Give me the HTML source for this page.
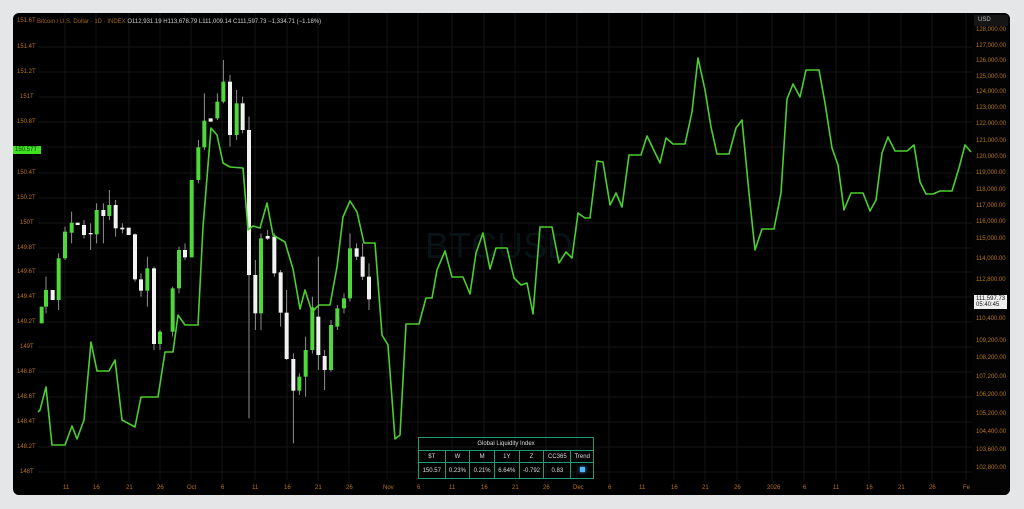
<!DOCTYPE html>
<html><head><meta charset="utf-8"><style>
html,body{margin:0;padding:0;background:#e5e6e8;width:1024px;height:509px;overflow:hidden;font-family:"Liberation Sans",sans-serif}
#f{position:absolute;left:13px;top:13px;width:997px;height:482px;background:#000;border-radius:6px;overflow:hidden}
.t{position:absolute;font-size:6px;color:#b8741c;white-space:nowrap}
table{border-collapse:collapse;position:absolute;left:418px;top:437px;width:176px;font-size:6px;color:#ddd;text-align:center}
td{border:1px solid #1f9a78;height:11px;padding:0}
</style></head><body>
<div id="f"></div>
<svg width="1024" height="509" style="position:absolute;left:0;top:0">
<defs><clipPath id="c"><rect x="13" y="13" width="997" height="482" rx="6"/></clipPath></defs>
<g clip-path="url(#c)">
<g stroke="#141414" stroke-width="1">
<path d="M65 13V480M96 13V480M129 13V480M160 13V480M191 13V480M222 13V480M255 13V480M287 13V480M318 13V480M349 13V480M387 13V480M418 13V480M452 13V480M484 13V480M515 13V480M546 13V480M577 13V480M609 13V480M642 13V480M674 13V480M705 13V480M737 13V480M772 13V480M804 13V480M836 13V480M869 13V480M901 13V480M932 13V480M966 13V480"/>
<path d="M38 47H972M38 72H972M38 97H972M38 122H972M38 147H972M38 173H972M38 198H972M38 223H972M38 248H972M38 272H972M38 297H972M38 322H972M38 347H972M38 372H972M38 397H972M38 422H972M38 447H972M38 472H972"/>
</g>
<text x="425" y="258" font-size="36" fill="#081317" font-family="Liberation Sans">BTCUSD</text>
<g transform="translate(30,60) scale(0.33333)" stroke-width="2.5">
<g stroke="#aaa" fill="none">
<path d="M48 650V760M86 580V750M105 500V600M125 455V550M162 480V535M182 490V570M200 430V550M220 430V550M238 390V480M257 420V530M277 490V520M315 520V665M333 640V710M352 590V740M372 620V870M390 810V870M428 680V830M447 560V700M465 550V600M505 240V370M523 100V270M562 100V180M580 0V130M600 45V260M620 90V240M638 110V220M657 170V1075M676 600V810M693 520V810M713 510V540M733 520V650M752 630V800M770 690V900M790 880V1150M808 940V1005M827 830V1010M847 710V880M865 590V930M884 870V990M903 780V935M922 735V810M942 700V760M960 520V725M980 550V600M998 550V660M1017 610V750"/>
</g>
<g fill="#4fd83a" stroke="none">
<rect x="29" y="740" width="12" height="50"/><rect x="42" y="690" width="12" height="50"/><rect x="80" y="595" width="12" height="125"/><rect x="99" y="515" width="12" height="80"/><rect x="119" y="488" width="12" height="30"/><rect x="194" y="450" width="12" height="73"/><rect x="232" y="435" width="12" height="33"/><rect x="346" y="625" width="12" height="67"/><rect x="384" y="815" width="12" height="37"/><rect x="422" y="685" width="12" height="130"/><rect x="441" y="570" width="12" height="115"/><rect x="479" y="360" width="12" height="232"/><rect x="499" y="262" width="12" height="98"/><rect x="517" y="182" width="12" height="80"/><rect x="556" y="125" width="12" height="50"/><rect x="574" y="65" width="12" height="60"/><rect x="614" y="130" width="12" height="95"/><rect x="687" y="535" width="12" height="225"/><rect x="802" y="950" width="12" height="42"/><rect x="821" y="870" width="12" height="80"/><rect x="841" y="742" width="12" height="128"/><rect x="897" y="795" width="12" height="135"/><rect x="916" y="745" width="12" height="55"/><rect x="936" y="715" width="12" height="30"/><rect x="954" y="565" width="12" height="150"/>
</g>
<g fill="#f2f2f2" stroke="none">
<rect x="62" y="690" width="12" height="30"/><rect x="137" y="488" width="12" height="7"/><rect x="156" y="495" width="12" height="30"/><rect x="176" y="519" width="12" height="4"/><rect x="214" y="450" width="12" height="18"/><rect x="251" y="435" width="12" height="70"/><rect x="271" y="503" width="12" height="5"/><rect x="290" y="503" width="12" height="22"/><rect x="309" y="523" width="12" height="135"/><rect x="327" y="658" width="12" height="34"/><rect x="366" y="625" width="12" height="227"/><rect x="459" y="570" width="12" height="22"/><rect x="536" y="175" width="12" height="10"/><rect x="594" y="65" width="12" height="160"/><rect x="632" y="130" width="12" height="80"/><rect x="651" y="210" width="12" height="435"/><rect x="670" y="645" width="12" height="115"/><rect x="707" y="528" width="12" height="8"/><rect x="727" y="530" width="12" height="110"/><rect x="746" y="637" width="12" height="121"/><rect x="764" y="758" width="12" height="139"/><rect x="784" y="897" width="12" height="95"/><rect x="859" y="770" width="12" height="115"/><rect x="878" y="888" width="12" height="42"/><rect x="974" y="565" width="12" height="25"/><rect x="992" y="590" width="12" height="60"/><rect x="1011" y="650" width="12" height="68"/>
</g>
</g>
<polyline fill="none" stroke="#4ccf2e" stroke-width="1.6" stroke-linejoin="round" points="38,412 40,410 46,387 52,445 65,445 72,426 77,439 84,420 91,342 97,371 109,371 115,360 122,420 135,427 141,397 158,397 165,352 173,352 178,315 185,325 198,325 203,227 211,128 217,135 223,163 230,167 243,168 248,230 253,226 260,228 267,203 273,235 285,242 293,269 300,309 305,290 312,312 319,305 330,305 337,267 343,217 350,201 357,212 364,243 375,243 382,335 388,345 395,439 400,435 406,324 419,324 426,298 432,298 437,270 445,251 452,277 463,277 470,294 476,253 483,233 490,269 496,248 507,248 514,278 521,285 527,283 533,314 540,227 552,227 559,263 566,252 572,258 578,213 585,218 590,218 597,161 603,162 610,205 616,193 622,207 629,155 641,155 647,136 660,163 666,138 673,144 685,144 692,112 698,58 705,90 711,127 717,154 729,154 736,128 742,120 749,193 755,250 762,229 774,229 781,193 787,99 793,84 800,97 806,70 819,70 825,103 832,148 838,165 844,210 851,193 863,193 870,211 876,200 882,153 888,137 895,151 907,151 914,145 920,182 926,194 933,194 940,191 952,191 959,168 965,145 971,152"/>
<rect x="972" y="13" width="38" height="482" fill="#030303"/>
<rect x="974" y="15" width="34" height="11" fill="#151515"/>
</g>
</svg>
<div class="t" style="left:978px;top:17px;color:#bbb">USD</div>
<div class="t" style="left:37px;top:19px;color:#a0621a">Bitcoin / U.S. Dollar · 1D · INDEX <span style="color:#ccc">O112,931.19 H113,678.79 L111,009.14 C111,597.73 −1,334.71 (−1.18%)</span></div>
<div class="t" style="left:17px;top:18px">151.6T</div><div class="t" style="left:17px;top:44px">151.4T</div><div class="t" style="left:17px;top:69px">151.2T</div><div class="t" style="left:20px;top:94px">151T</div><div class="t" style="left:17px;top:119px">150.8T</div>
<div class="t" style="left:13px;top:146px;background:#3ee01f;color:#0a3a06;padding:1px 4px 1px 2px">150.57T</div>
<div class="t" style="left:17px;top:170px">150.4T</div><div class="t" style="left:17px;top:195px">150.2T</div><div class="t" style="left:20px;top:220px">150T</div><div class="t" style="left:17px;top:245px">149.8T</div><div class="t" style="left:17px;top:269px">149.6T</div><div class="t" style="left:17px;top:294px">149.4T</div><div class="t" style="left:17px;top:319px">149.2T</div><div class="t" style="left:20px;top:344px">149T</div><div class="t" style="left:17px;top:369px">148.8T</div><div class="t" style="left:17px;top:394px">148.6T</div><div class="t" style="left:17px;top:419px">148.4T</div><div class="t" style="left:17px;top:444px">148.2T</div><div class="t" style="left:20px;top:469px">148T</div>
<div class="t" style="left:976px;top:27px">128,000.00</div><div class="t" style="left:976px;top:43px">127,000.00</div><div class="t" style="left:976px;top:58px">126,000.00</div><div class="t" style="left:976px;top:74px">125,000.00</div><div class="t" style="left:976px;top:89px">124,000.00</div><div class="t" style="left:976px;top:105px">123,000.00</div><div class="t" style="left:976px;top:121px">122,000.00</div><div class="t" style="left:976px;top:138px">121,000.00</div><div class="t" style="left:976px;top:154px">120,000.00</div><div class="t" style="left:976px;top:170px">119,000.00</div><div class="t" style="left:976px;top:187px">118,000.00</div><div class="t" style="left:976px;top:203px">117,000.00</div><div class="t" style="left:976px;top:219px">116,000.00</div><div class="t" style="left:976px;top:236px">115,000.00</div><div class="t" style="left:976px;top:256px">114,000.00</div><div class="t" style="left:976px;top:277px">112,800.00</div>
<div class="t" style="left:974px;top:295px;background:#eee;color:#111;padding:1px 2px;line-height:6px">111,597.73<br>05:40:45</div>
<div class="t" style="left:976px;top:316px">110,400.00</div><div class="t" style="left:976px;top:338px">109,200.00</div><div class="t" style="left:976px;top:355px">108,200.00</div><div class="t" style="left:976px;top:374px">107,200.00</div><div class="t" style="left:976px;top:392px">106,200.00</div><div class="t" style="left:976px;top:411px">105,200.00</div><div class="t" style="left:976px;top:429px">104,400.00</div><div class="t" style="left:976px;top:447px">103,600.00</div><div class="t" style="left:976px;top:465px">102,800.00</div>
<div class="t" style="left:63px;top:485px">11</div><div class="t" style="left:93px;top:485px">16</div><div class="t" style="left:126px;top:485px">21</div><div class="t" style="left:157px;top:485px">26</div><div class="t" style="left:187px;top:485px">Oct</div><div class="t" style="left:221px;top:485px">6</div><div class="t" style="left:252px;top:485px">11</div><div class="t" style="left:284px;top:485px">16</div><div class="t" style="left:315px;top:485px">21</div><div class="t" style="left:346px;top:485px">26</div><div class="t" style="left:383px;top:485px">Nov</div><div class="t" style="left:417px;top:485px">6</div><div class="t" style="left:449px;top:485px">11</div><div class="t" style="left:481px;top:485px">16</div><div class="t" style="left:512px;top:485px">21</div><div class="t" style="left:543px;top:485px">26</div><div class="t" style="left:573px;top:485px">Dec</div><div class="t" style="left:608px;top:485px">6</div><div class="t" style="left:639px;top:485px">11</div><div class="t" style="left:671px;top:485px">16</div><div class="t" style="left:702px;top:485px">21</div><div class="t" style="left:734px;top:485px">26</div><div class="t" style="left:767px;top:485px">2026</div><div class="t" style="left:803px;top:485px">6</div><div class="t" style="left:833px;top:485px">11</div><div class="t" style="left:866px;top:485px">16</div><div class="t" style="left:898px;top:485px">21</div><div class="t" style="left:929px;top:485px">26</div><div class="t" style="left:963px;top:485px">Fe</div>
<table>
<tr><td colspan="7" style="height:12px">Global Liquidity Index</td></tr>
<tr><td>$T</td><td>W</td><td>M</td><td>1Y</td><td>Z</td><td>CC365</td><td>Trend</td></tr>
<tr><td style="height:15px">150.57</td><td>0.23%</td><td>0.21%</td><td>6.64%</td><td>-0.792</td><td>0.83</td><td><span style="display:inline-block;width:5px;height:5px;background:#4cb8ff;box-shadow:0 0 3px #4cb8ff"></span></td></tr>
</table>
</body></html>
